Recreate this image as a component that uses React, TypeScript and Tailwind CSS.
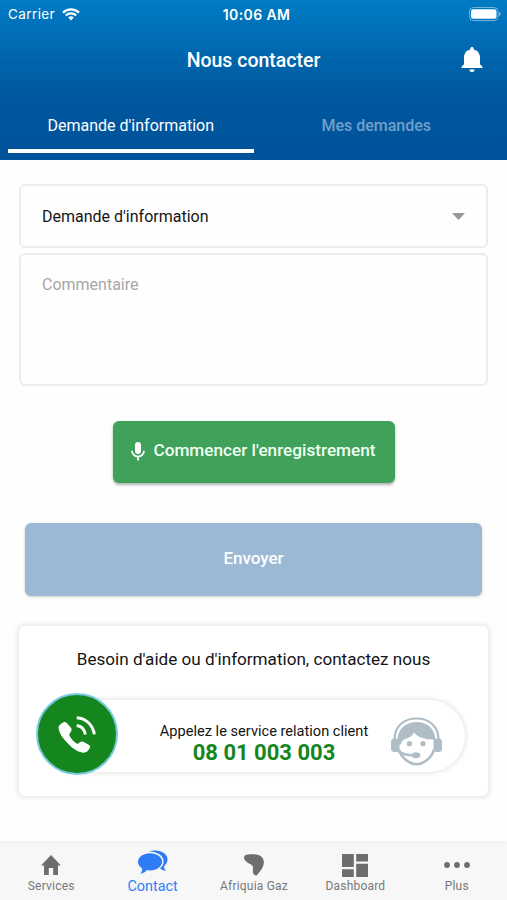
const tabs = [
  { label: "Services", icon: <HomeIcon /> },
  { label: "Contact", icon: <ChatIcon />, active: true },
  { label: "Afriquia Gaz", icon: <AfriquiaIcon /> },
  { label: "Dashboard", icon: <DashboardIcon /> },
  { label: "Plus", icon: <MoreIcon /> },
];

function WifiIcon() {
  return (
    <svg width="18" height="13" viewBox="0 0 18 13" fill="none" stroke="white" strokeWidth="2.3">
      <path d="M1 4.6a11.4 11.4 0 0 1 16 0" />
      <path d="M3.8 7.5a7.5 7.5 0 0 1 10.4 0" />
      <path d="M6.2 9.6a4.2 4.2 0 0 1 5.6 0L9 12.4z" fill="white" stroke="none" />
    </svg>
  );
}

function BatteryIcon() {
  return (
    <svg width="32" height="14" viewBox="0 0 32 14">
      <rect x="0.5" y="0.5" width="28.5" height="13" rx="4" fill="none" stroke="white" strokeOpacity="0.45" />
      <rect x="2" y="2.3" width="25.5" height="9.5" rx="2.4" fill="white" />
      <path d="M30 5v4c1-.3 1.600-1 1.600-2S31 5.300 30 5z" fill="white" fillOpacity="0.5" />
    </svg>
  );
}

function BellIcon() {
  return (
    <svg width="22" height="25" viewBox="0 0 22 25" fill="white">
      <path d="M11 0c1 0 1.700.7 1.700 1.700v.8c3.800.8 6.300 4 6.300 8.100v6.600l2.500 2.600v1.300H.5v-1.300L3 17.200v-6.600c0-4.100 2.500-7.300 6.300-8.100v-.8C9.300.7 10 0 11 0z" />
      <path d="M8.400 22.400h5.200a2.600 2.500 0 0 1-5.200 0z" />
    </svg>
  );
}

function MicIcon() {
  return (
    <svg width="14" height="19" viewBox="0 0 14 19">
      <rect x="4" y="0" width="6" height="12" rx="3" fill="white" />
      <path d="M1 8.800a6 5.800 0 0 0 12 0M7 14.500V18.500" fill="none" stroke="white" strokeWidth="1.8" />
    </svg>
  );
}

function PhoneIcon() {
  return (
    <svg width="39" height="39" viewBox="0 0 39 39" fill="none">
      <path
        d="M5.500 7.300c1.200-.7 2.300-.3 3 .5l4.300 4.700c1 1.200 1 2.500.3 3.700l-2 3.500c1.500 3.800 4.800 7.300 8.300 9.200l3-2c1.200-.7 2.300-.6 3.400 0l5.200 3.100c1.100.7 1.500 1.700.8 2.900-1.200 2-2.800 4.200-5 4.700-4.500.6-10.300-2.600-14.600-6.800C6.800 25.300 1 19.500.5 12.800c0-2.200 3-4.500 5-5.500z"
        fill="white"
      />
      <path d="M18.700 10.600c4.600.7 7.800 4 8.600 8.800M18.700 2.700C28 3.200 35 10.200 36.300 19.400" stroke="white" strokeWidth="3" />
    </svg>
  );
}

function AgentIcon() {
  return (
    <svg width="51" height="49" viewBox="0 0 51 49" fill="#afbdc6">
      <path d="M3.500 23C3.500 9 13 1.500 25.500 1.500S47.500 9 47.500 23" fill="none" stroke="#afbdc6" strokeWidth="2.2" />
      <path d="M6.500 24C6.500 11.500 15 5 25.500 5S44.500 11.500 44.500 24l-3.500-1.800C34 22.700 27 20.500 23 15.500c-2 4-5.500 5.500-9 6.500-2 .8-3.500 2.500-4.500 5.500h-3z" />
      <rect x="0" y="21.500" width="8.500" height="13.500" rx="3.500" />
      <rect x="42.500" y="21.500" width="8.500" height="13.500" rx="3.500" />
      <path d="M8 32.500C10 40.500 18 47.200 25.500 47.200S41 40.500 43 32.500" fill="none" stroke="#afbdc6" strokeWidth="2.6" />
      <circle cx="18.500" cy="26.700" r="2.600" />
      <circle cx="32" cy="26.700" r="2.600" />
      <path d="M7 34c4 3 9 4.300 16 4.300" fill="none" stroke="#afbdc6" strokeWidth="2.2" />
      <ellipse cx="25" cy="38.300" rx="4.300" ry="3" />
    </svg>
  );
}

function HomeIcon() {
  return (
    <svg width="20" height="20" viewBox="0 0 20 20" fill="currentColor">
      <path d="M10 0 20 10.500h-3V20h-4.800v-7H7.800v7H3v-9.500H0z" />
    </svg>
  );
}

function ChatIcon() {
  return (
    <svg width="30" height="25" viewBox="0 0 30 25" fill="currentColor">
      <path d="M11 1.400C14 .3 17 .2 20 .8c6 1.200 10 4.700 9.500 9.200-.2 2.700-1.700 4.700-3.500 6.300 0 1.800.8 3.200 2.200 4.500-2.600-.1-4.700-1-6.200-2.500 2.500-2 3.600-4.200 3.600-6.900C25.600 5.600 19.500 1.400 11 1.400z" />
      <path d="M12 3.200c6.800 0 12.200 3.800 12.200 8.600s-5.400 8.600-12.200 8.600c-1 0-2-.1-3-.3-1.800 2-3.700 3.500-6.500 3.800C3.500 22.500 4.200 20.600 4.200 18.400 1.500 17 0 14.500 0 11.800 0 7 5.200 3.200 12 3.200z" />
    </svg>
  );
}

function AfriquiaIcon() {
  return (
    <svg width="20" height="22" viewBox="0 0 20 22" fill="currentColor">
      <path d="M0 3C.5.8 3 .2 6 .2c5-.2 9.500.3 12 3 2 2.300 2.300 5.300 1.300 8.300-1.300 4-4.300 7.500-7 10.300-2.500-1-3.500-2.500-3.500-4.600L9 13.500c-.2-1.800-1.200-2.600-2.500-3.300C3.500 8.800 0 6.500 0 3z" />
    </svg>
  );
}

function DashboardIcon() {
  return (
    <svg width="26" height="23" viewBox="0 0 26 23" fill="currentColor">
      <path d="M0 0h11.800v13H0zM14.200 0H26v7.500H14.200zM0 15.300h11.800V23H0zM14.200 9.800H26V23H14.200z" />
    </svg>
  );
}

function MoreIcon() {
  return (
    <svg width="26" height="6" viewBox="0 0 26 6" fill="currentColor">
      <circle cx="3" cy="3" r="2.9" />
      <circle cx="13" cy="3" r="2.9" />
      <circle cx="23" cy="3" r="2.9" />
    </svg>
  );
}

function Header() {
  return (
    <header className="h-40 bg-linear-to-b from-[#007bc4] via-[#00589f] via-60% to-[#00529a] text-white">
      <div className="grid h-7 grid-cols-[1fr_auto_1fr] items-center pr-1.5 pl-2">
        <div className="flex items-center gap-[7px] font-[Inter] text-[13.5px] tracking-[0.4px]">
          <span>Carrier</span>
          <WifiIcon />
        </div>
        <p className="pl-1 text-center font-[Inter] text-[14px] font-semibold tracking-[0.4px] whitespace-nowrap">10:06 AM</p>
        <div className="flex justify-end">
          <BatteryIcon />
        </div>
      </div>
      <div className="grid h-16 grid-cols-[1fr_auto_1fr] items-center px-6">
        <h1 className="col-start-2 pt-0.5 text-[19.5px] font-medium">Nous contacter</h1>
        <div className="flex justify-end pb-0.5">
          <BellIcon />
        </div>
      </div>
      <nav className="grid h-[61px] grid-cols-2 px-2 text-[16px]">
        <button className="h-full border-b-4 border-white pt-2.5">Demande d'information</button>
        <button className="h-full border-b-4 border-transparent pt-2.5 font-medium text-[#71a0ca]">Mes demandes</button>
      </nav>
    </header>
  );
}

function HelpCard() {
  return (
    <section className="mt-[30px] h-[170px] rounded-md bg-white pt-[23px] shadow-[0_0_5px_2px_rgba(0,0,0,0.09)]">
      <p className="text-center text-[17.1px] leading-5">Besoin d'aide ou d'information, contactez nous</p>
      <div className="mt-6 flex h-[82px] items-center px-[17px]">
        <div className="z-10 flex size-[82px] shrink-0 items-center justify-center rounded-full border-[2.5px] border-[#78cbe0] bg-[#15861d]">
          <PhoneIcon />
        </div>
        <div className="mt-1 -ml-11 flex h-[72px] w-[391px] items-center rounded-r-full bg-white pr-[23px] pl-[85px] shadow-[0_0_4px_2px_rgba(0,0,0,0.09)]">
          <div className="w-[210px] pt-3.5 text-center whitespace-nowrap">
            <p className="text-[14.6px] leading-5">Appelez le service relation client</p>
            <p className="text-[22px] leading-6 font-bold text-[#15861d]">08 01 003 003</p>
          </div>
          <div className="ml-auto pt-2.5">
            <AgentIcon />
          </div>
        </div>
      </div>
    </section>
  );
}

export default function App() {
  return (
    <div className="flex h-[900px] w-[507px] flex-col overflow-hidden bg-[#fefefe] font-[Roboto,sans-serif] text-[#151515]">
      <Header />
      <main className="flex flex-1 flex-col px-[19px] pt-6">
        <button className="flex h-16 items-center justify-between rounded-md border-2 border-[#ececec] pr-[21px] pl-[21px] text-[16px]">
          <span className="pt-0.5">Demande d'information</span>
          <svg width="13" height="7" viewBox="0 0 13 7" fill="#999">
            <path d="M0 0h13L6.500 7z" />
          </svg>
        </button>
        <div className="mt-[5px] h-[133px] rounded-md border-2 border-[#ececec] px-[21px] pt-[18px] text-[16px] text-[#a7a7a7]">
          Commentaire
        </div>
        <button className="mt-[35px] flex h-[62px] w-[282px] items-center justify-center gap-2 self-center rounded-md bg-[#3fa15a] pb-0.5 text-[17.2px] font-medium text-[#effff0] shadow-[0_2px_3px_rgba(0,0,0,0.3)]">
          <MicIcon />
          Commencer l'enregistrement
        </button>
        <button className="mx-1.5 mt-10 h-[73px] rounded-md bg-[#9bb9d5] pb-0.5 text-[17px] font-medium text-white shadow-[0_1px_3px_rgba(0,0,0,0.2)]">
          Envoyer
        </button>
        <HelpCard />
      </main>
      <footer className="grid h-[57px] grid-cols-5 bg-[#f7f7f7] text-[#6d6d6d] shadow-[0_-1px_3px_rgba(0,0,0,0.1)]">
        {tabs.map((tab) => (
          <div key={tab.label} className={tab.active ? "flex flex-col items-center text-[#2f7df6]" : "flex flex-col items-center"}>
            <div className={tab.active ? "flex h-8 items-end pl-0.5" : "flex h-8 items-center pt-3 pl-px"}>{tab.icon}</div>
            <span className={tab.active ? "pl-px text-[14.4px] leading-[23px]" : "mt-[3px] pl-px text-[12px] leading-4 tracking-[0.2px] text-[#777]"}>
              {tab.label}
            </span>
          </div>
        ))}
      </footer>
    </div>
  );
}
